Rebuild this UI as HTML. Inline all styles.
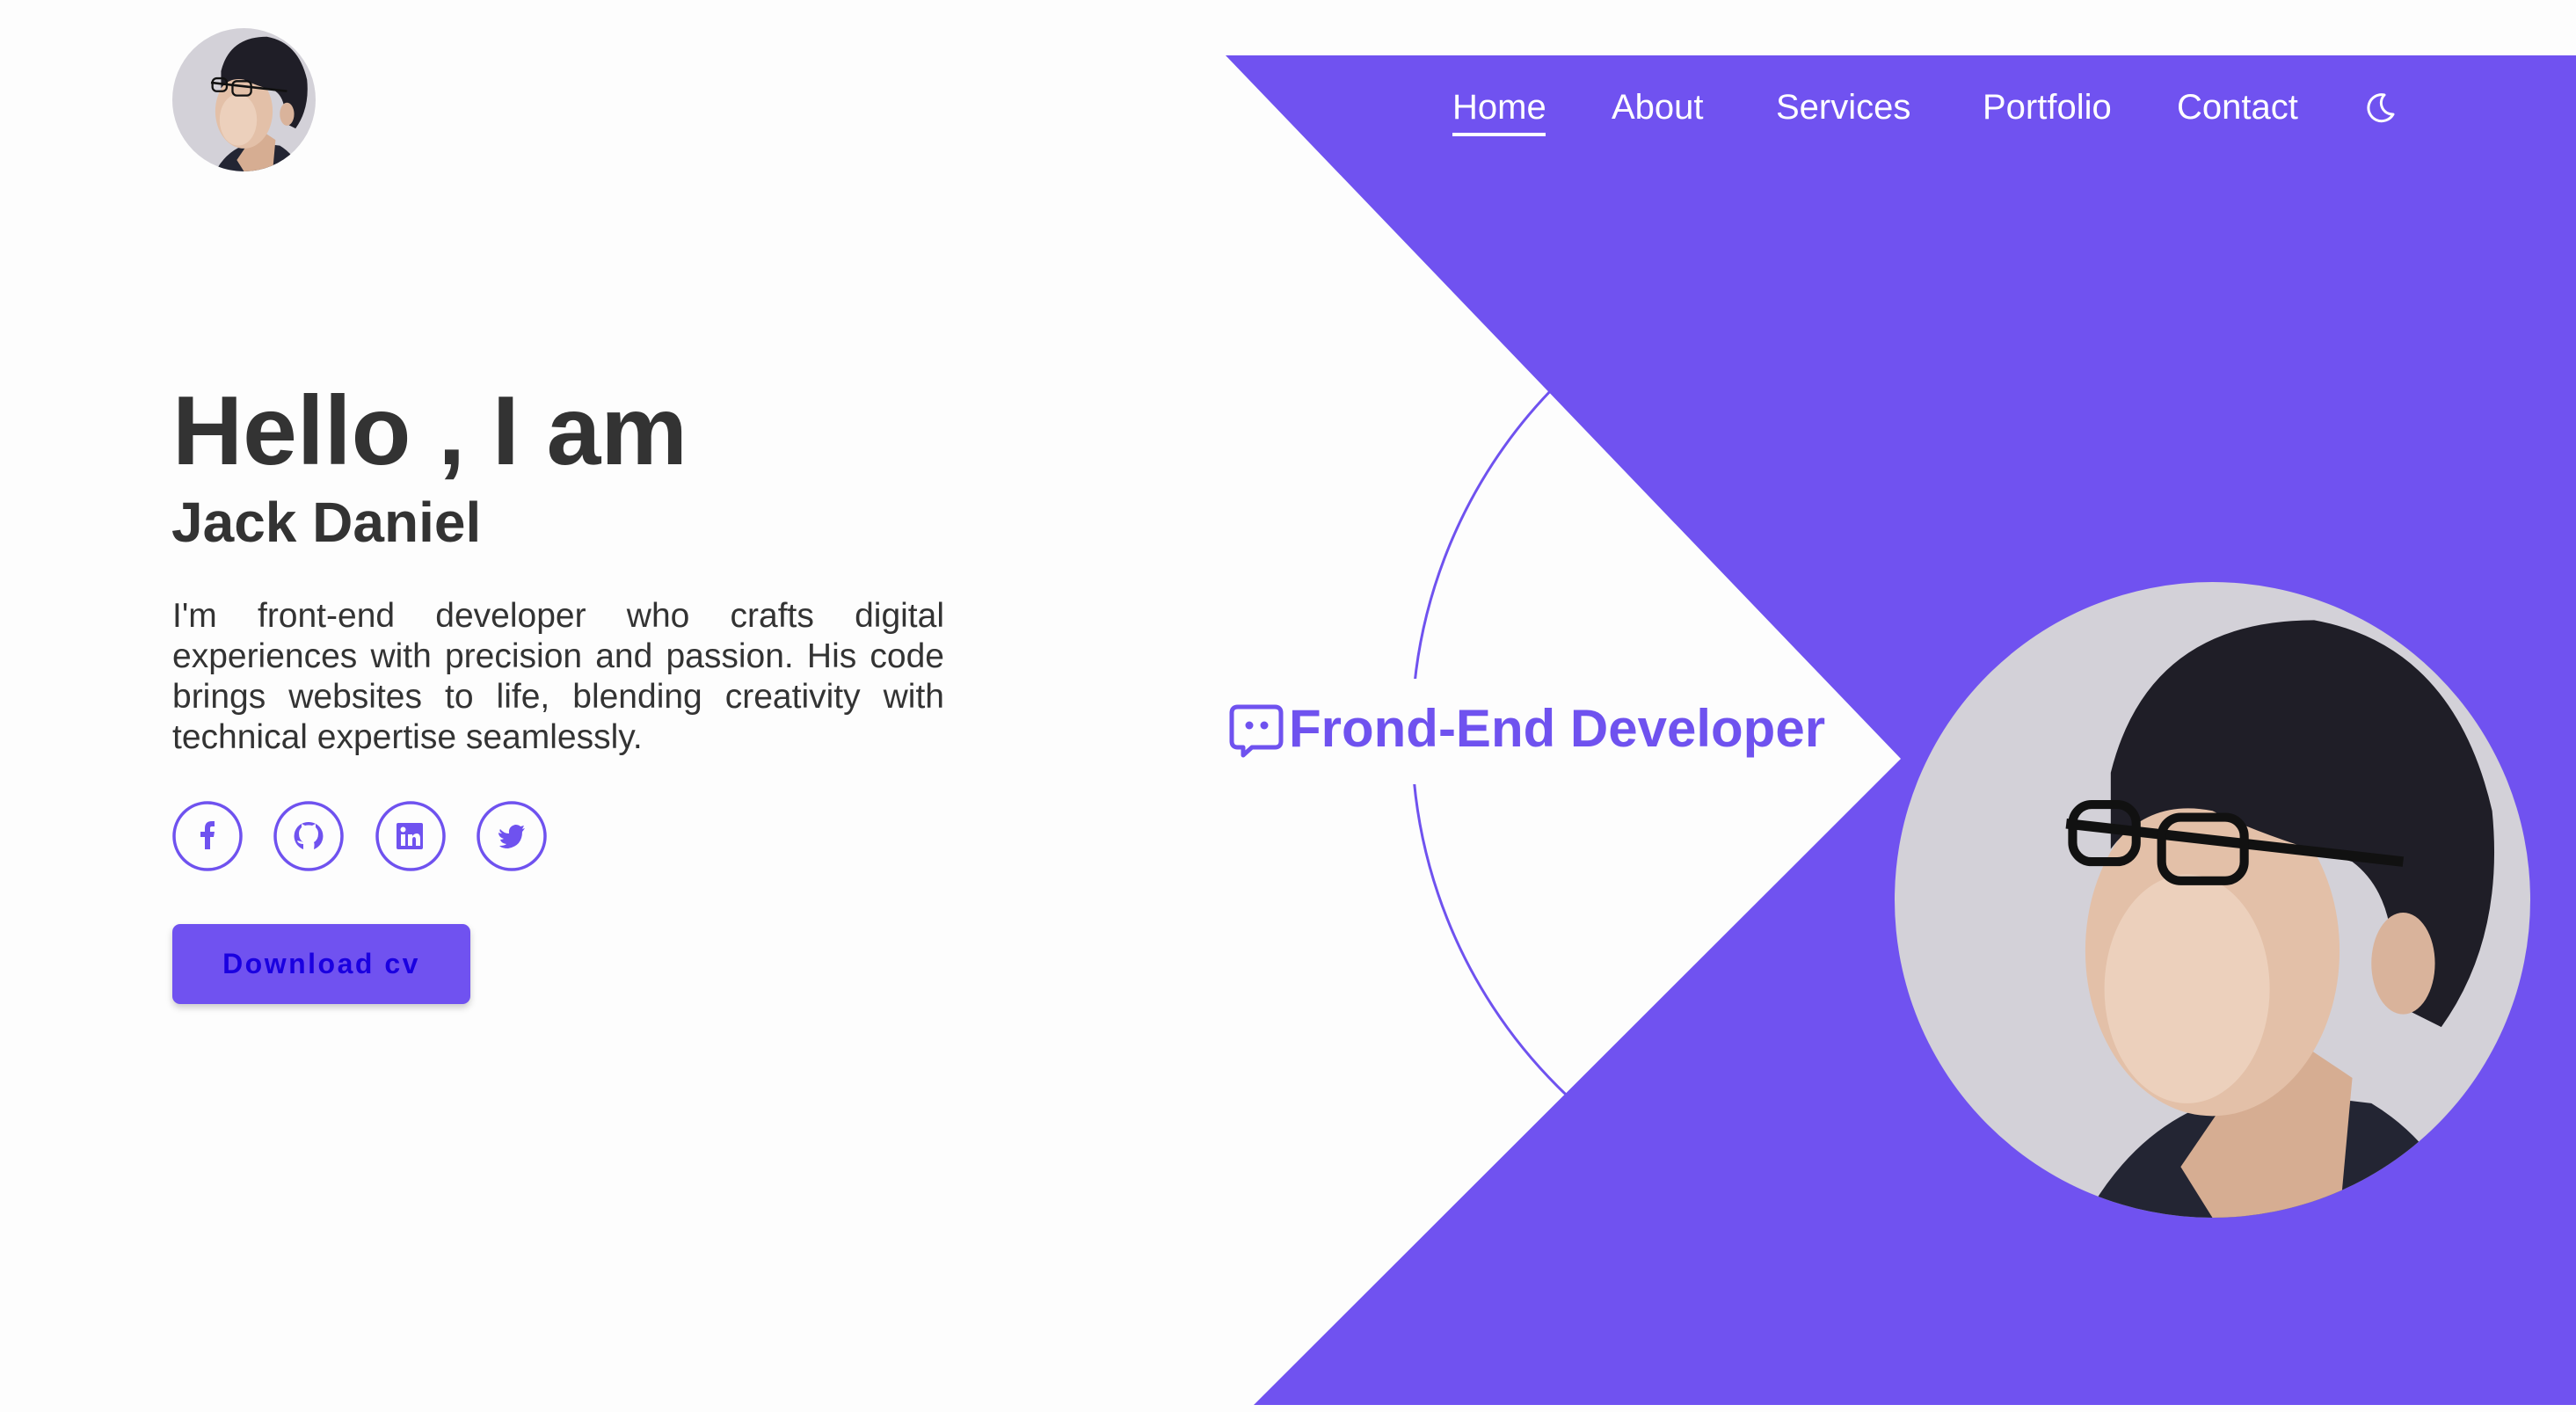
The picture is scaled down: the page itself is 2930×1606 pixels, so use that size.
<!DOCTYPE html>
<html><head><meta charset="utf-8"><style>
html,body{margin:0;padding:0;width:2930px;height:1606px;overflow:hidden;background:#fdfdfd;font-family:"Liberation Sans",Arial,sans-serif;}
.a{position:absolute;white-space:nowrap;}
.nav{color:#fff;font-size:40px;top:98px;line-height:48px;}
</style></head><body>
<svg class="a" style="left:0;top:0" width="2930" height="1606">
  <defs>
    <clipPath id="bc"><circle cx="50" cy="50" r="50"/></clipPath>
    <g id="face">
      <g clip-path="url(#bc)">
        <rect width="100" height="100" fill="#d3d1d8"/>
        <path d="M30 100 Q40 82 58 80 L75 82 Q85 88 90 100 Z" fill="#232533"/>
        <path d="M45 92 L60 70 L72 78 L70 100 L50 100 Z" fill="#d6ad92"/>
        <ellipse cx="50" cy="58" rx="20" ry="26" fill="#e3c0a8"/>
        <ellipse cx="46" cy="64" rx="13" ry="18" fill="#ecd0bc"/>
        <path d="M34 30 Q40 6 66 6 Q88 10 94 36 Q96 56 86 70 L78 66 Q80 50 72 44 Q58 40 50 36 Q40 34 34 42 Z" fill="#1f1e27"/>
        <ellipse cx="80" cy="60" rx="5" ry="8" fill="#d9b39b"/>
        <path d="M27 38 L80 44" stroke="#111" stroke-width="1.6"/>
        <rect x="28" y="35" width="10" height="9" rx="3" fill="none" stroke="#111" stroke-width="1.4"/>
        <rect x="42" y="37" width="13" height="10" rx="3" fill="none" stroke="#111" stroke-width="1.4"/>
      </g>
    </g>
  </defs>
  <circle cx="2171" cy="836" r="565" fill="none" stroke="#6f52ef" stroke-width="3"/>
  <rect x="1590" y="772" width="40" height="120" fill="#fdfdfd"/>
  <polygon points="1394,63 2930,63 2930,1598 1426,1598 2162,863" fill="#7052f0"/>
  <use href="#face" transform="translate(2155,662) scale(7.23)"/>
  <use href="#face" transform="translate(196,32) scale(1.63)"/>
  <path d="M1408 804 H1450 Q1457 804 1457 811 V843 Q1457 850 1450 850 H1424 L1414 859 V850 H1408 Q1401 850 1401 843 V811 Q1401 804 1408 804 Z" fill="none" stroke="#6f52ef" stroke-width="5" stroke-linejoin="round"/>
  <circle cx="1421" cy="825" r="4.5" fill="#6f52ef"/><circle cx="1438" cy="825" r="4.5" fill="#6f52ef"/>
  <path d="M2712 108 A15 15 0 1 0 2722 130 A13 13 0 0 1 2712 108 Z" fill="none" stroke="#fff" stroke-width="3" stroke-linejoin="round"/>
  <g fill="none" stroke="#6f52ef" stroke-width="3.5">
    <circle cx="236" cy="951" r="38"/><circle cx="351" cy="951" r="38"/><circle cx="467" cy="951" r="38"/><circle cx="582" cy="951" r="38"/>
  </g>
  <g fill="#6f52ef">
    <path d="M233 966 V952 H228 V946 H233 V942 Q233 934 241 934 H244 V940 H241 Q239 940 239 942 V946 H244 L243 952 H239 V966 Z"/>
    <path d="M351 935 A16 16 0 0 0 345 966 L345 960 Q339 960 338 956 Q343 957 345 958 Q340 955 340 948 Q340 944 343 941 L343 937 L347 939 Q351 938 355 939 L359 937 L359 941 Q362 944 362 948 Q362 955 357 958 Q358 960 357 966 A16 16 0 0 0 351 935 Z"/>
    <rect x="451" y="936" width="30" height="30" rx="2"/>
    <path d="M569 943 Q573 948 579 948 Q578 940 586 938 Q590 938 592 940 L596 939 L594 943 L597 942 Q595 945 594 946 Q594 962 578 965 Q571 965 568 962 Q574 962 576 960 Q570 959 569 955 Q571 955 573 954 Q567 952 567 947 Q569 948 571 948 Q567 945 569 943 Z"/>
  </g>
  <g fill="#fdfdfd"><rect x="456" y="949" width="5" height="13"/><circle cx="458.5" cy="943.5" r="3"/><path d="M464 949 H469 V951 Q471 948 474 948 Q478 948 478 954 V962 H473 V955 Q473 952 471 952 Q469 952 469 955 V962 H464 Z"/></g>
</svg>
<div class="a" style="left:1652px;width:106px;height:4px;top:151px;background:#fff"></div>
<div class="a nav" style="left:1652px">Home</div>
<div class="a nav" style="left:1833px">About</div>
<div class="a nav" style="left:2020px">Services</div>
<div class="a nav" style="left:2255px">Portfolio</div>
<div class="a nav" style="left:2476px">Contact</div>
<div class="a" style="left:196px;top:425px;font-size:111px;font-weight:bold;color:#333;line-height:130px">Hello , I am</div>
<div class="a" style="left:195px;top:556px;font-size:64px;font-weight:bold;color:#333;line-height:76px">Jack Daniel</div>
<div class="a" style="left:196px;top:678px;width:878px;white-space:normal;text-align:justify;font-size:39px;line-height:46px;color:#333">I'm front-end developer who crafts digital experiences with precision and passion. His code brings websites to life, blending creativity with technical expertise seamlessly.</div>
<div class="a" style="left:196px;top:1051px;width:339px;height:91px;border-radius:9px;background:#7052f0;box-shadow:0 4px 8px rgba(0,0,0,.2);color:#1a00e0;font-weight:bold;font-size:32px;letter-spacing:2.5px;text-align:center;line-height:91px">Download cv</div>
<div class="a" style="left:1466px;top:794px;font-size:60px;font-weight:bold;color:#6f52ef;line-height:70px">Frond-End Developer</div>
</body></html>
